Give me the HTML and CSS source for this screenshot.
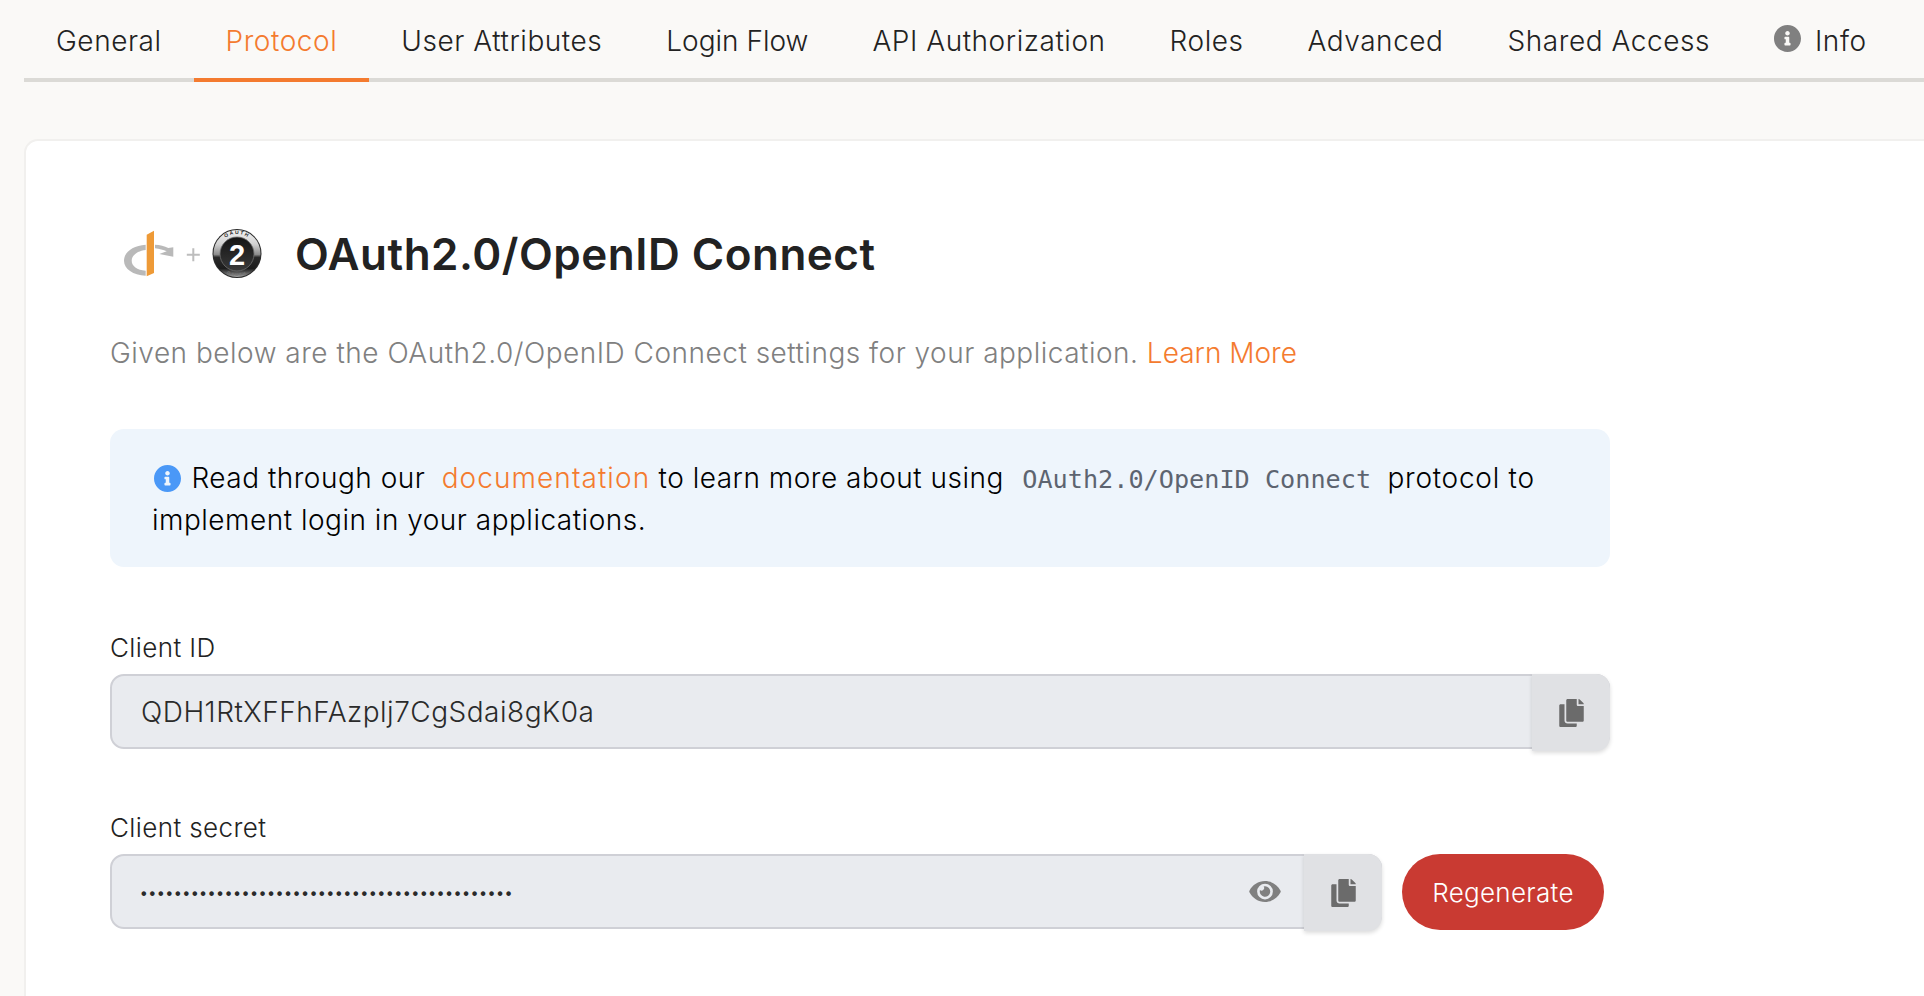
FILE: index.html
```html
<!DOCTYPE html>
<html lang="en">
<head>
<meta charset="utf-8">
<title>Protocol</title>
<link rel="stylesheet" href="styles.css">
</head>
<body>
<svg class="defs" width="0" height="0" aria-hidden="true">
  <symbol id="i-copy" viewBox="0 0 448 512"><path d="M320 448v40c0 13.255-10.745 24-24 24H24c-13.255 0-24-10.745-24-24V120c0-13.255 10.745-24 24-24h72v296c0 30.879 25.121 56 56 56h168zm0-344V0H152c-13.255 0-24 10.745-24 24v368c0 13.255 10.745 24 24 24h272c13.255 0 24-10.745 24-24V128H344c-13.2 0-24-10.8-24-24zm120.971-31.029L375.029 7.029A24 24 0 0 0 358.059 0H352v96h96v-6.059a24 24 0 0 0-7.029-16.97z"/></symbol>
  <symbol id="i-info" viewBox="8 8 496 496"><path d="M256 8C119.043 8 8 119.083 8 256c0 136.997 111.043 248 248 248s248-111.003 248-248C504 119.083 392.957 8 256 8zm0 110c23.196 0 42 18.804 42 42s-18.804 42-42 42-42-18.804-42-42 18.804-42 42-42zm56 254c0 6.627-5.373 12-12 12h-88c-6.627 0-12-5.373-12-12v-24c0-6.627 5.373-12 12-12h12v-64h-12c-6.627 0-12-5.373-12-12v-24c0-6.627 5.373-12 12-12h64c6.627 0 12 5.373 12 12v100h12c6.627 0 12 5.373 12 12v24z"/></symbol>
  <symbol id="i-eye" viewBox="0 64 576 384"><path d="M572.52 241.4C518.29 135.59 410.93 64 288 64S57.68 135.64 3.48 241.41a32.35 32.35 0 0 0 0 29.19C57.71 376.41 165.07 448 288 448s230.32-71.64 284.52-177.41a32.35 32.35 0 0 0 0-29.19zM288 400a144 144 0 1 1 144-144 143.93 143.93 0 0 1-144 144zm0-240a95.31 95.31 0 0 0-25.31 3.79 47.85 47.85 0 0 1-66.9 66.9A95.78 95.78 0 1 0 288 160z"/></symbol>
</svg>

<nav class="tabs">
  <a class="tab">General</a>
  <a class="tab tab-active">Protocol</a>
  <a class="tab">User Attributes</a>
  <a class="tab tab-tight">Login Flow</a>
  <a class="tab">API Authorization</a>
  <a class="tab">Roles</a>
  <a class="tab">Advanced</a>
  <a class="tab">Shared Access</a>
  <a class="tab"><svg class="tab-icon"><use href="#i-info"/></svg>Info</a>
</nav>

<main class="card">
  <header class="heading">
    <svg class="logos" viewBox="0 0 140 50" width="140" height="50" aria-hidden="true">
      <defs>
        <linearGradient id="sheen" x1="0" y1="0" x2="0" y2="1">
          <stop offset="0" stop-color="#f2f2f2"/>
          <stop offset=".3" stop-color="#d2d2d2"/>
          <stop offset=".52" stop-color="#8e8e8e"/>
          <stop offset=".58" stop-color="#2a2a2a"/>
          <stop offset=".82" stop-color="#1c1c1c"/>
          <stop offset=".95" stop-color="#777"/>
          <stop offset="1" stop-color="#aaa"/>
        </linearGradient>
        <linearGradient id="disc" x1="0" y1="0" x2="0" y2="1">
          <stop offset="0" stop-color="#141414"/>
          <stop offset="1" stop-color="#3a3a3a"/>
        </linearGradient>
        <path id="arc-top" d="M93.500 24.500a19.500 19.500 0 0 1 39 0"/>
        <path id="arc-bottom" d="M90.500 24.500a22.500 22.500 0 0 0 45 0"/>
      </defs>
      <path fill="#b9b9b9" d="M21.700 15.700C9 16.500 0 23 0 31.700 0 40 9 46 21.700 46.700v-5C13 41 7.700 37 7.700 31.700 7.700 26.500 13 22 21.700 21z"/>
      <path fill="#ee9a37" d="M22.700 5.700 30 1.700V44l-7.300 3.300z"/>
      <path fill="#b9b9b9" d="M31 15.700c5 .3 9.500 1.300 13.300 3.200l5-.6v9.400l-14-2.700 7.400-2.700c-3.300-1.400-7.200-2.600-11.700-3z"/>
      <path fill="#bdbdbd" d="M62.800 24.700h5.500v-5.500h2v5.500h5.500v2h-5.500v5.500h-2v-5.500h-5.500z"/>
      <circle cx="113" cy="24.500" r="24.500" fill="#2b2b2b"/>
      <circle cx="113" cy="24.500" r="23.500" fill="url(#sheen)"/>
      <circle cx="113" cy="25" r="17" fill="url(#disc)" stroke="#6f6f6f" stroke-width=".8"/>
      <text class="badge-num" x="113" y="35.500" text-anchor="middle">2</text>
      <text class="badge-top"><textPath href="#arc-top" startOffset="50%" text-anchor="middle">OAUTH</textPath></text>
      <text class="badge-bottom"><textPath href="#arc-bottom" startOffset="50%" text-anchor="middle">OAUTH</textPath></text>
    </svg>
    <h1 class="title">OAuth2.0/OpenID Connect</h1>
  </header>

  <p class="desc">Given below are the OAuth2.0/OpenID Connect settings for your application. <a class="link learn">Learn More</a></p>

  <div class="alert">
    <div class="alert-line"><svg class="alert-icon"><use href="#i-info"/></svg> Read through our <a class="link doc">documentation</a> to learn more about using <code class="code">OAuth2.0/OpenID Connect</code> <span class="alert-end">protocol to</span></div>
    <div class="alert-line">implement login in your applications.</div>
  </div>

  <div class="field">
    <label class="label">Client ID</label>
    <div class="row">
      <div class="input">
        <span class="value">QDH1RtXFFhFAzplj7CgSdai8gK0a</span>
        <button class="copy"><svg class="copy-icon"><use href="#i-copy"/></svg></button>
      </div>
    </div>
  </div>

  <div class="field">
    <label class="label">Client secret</label>
    <div class="row">
      <div class="input input-secret">
        <span class="value dots">••••••••••••••••••••••••••••••••••••••••••••</span>
        <svg class="eye"><use href="#i-eye"/></svg>
        <button class="copy"><svg class="copy-icon"><use href="#i-copy"/></svg></button>
      </div>
      <button class="regen">Regenerate</button>
    </div>
  </div>
</main>
</body>
</html>
```
FILE: styles.css
```css
* { box-sizing: border-box; }
html, body { height: 996px; overflow: hidden; }
body {
  margin: 0;
  background: #faf9f7;
  font-family: Inter, "Liberation Sans", sans-serif;
  font-weight: 300;
  color: #222;
}
.defs { position: absolute; }

.tabs {
  display: flex;
  margin-left: 24px;
  height: 82px;
  border-bottom: 4px solid #dbdad6;
}
.tab {
  display: flex;
  align-items: center;
  gap: 14px;
  height: 82px;
  padding: 8px 32px 4px;
  border-bottom: 4px solid transparent;
  font-size: 28px;
  letter-spacing: 0.55px;
  color: #222;
  white-space: nowrap;
}
.tab-tight { letter-spacing: 0; }
.tab-active { color: #f47b2f; border-bottom-color: #f47b2f; }
.tab-icon { width: 27px; height: 27px; fill: #808080; margin-top: -6px; }

.card {
  margin: 57px 0 0 24px;
  width: 1900px;
  height: 857px;
  background: #fff;
  border: 2px solid #f1f0ee;
  border-width: 2px 0 0 2px;
  border-radius: 14px 0 0 0;
  padding: 87px 0 0 84px;
}
.heading { display: flex; align-items: center; gap: 31px; margin-left: 14px; height: 52px; }
.logos { flex: none; }
.badge-num { font: 800 29px "Liberation Sans", sans-serif; fill: #fff; }
.badge-top { font: 700 5px "Liberation Sans", sans-serif; fill: #1c1c1c; letter-spacing: 1.4px; }
.badge-bottom { font: 700 4px "Liberation Sans", sans-serif; fill: #777; letter-spacing: 1.4px; }
.title { margin: 0; font-size: 44px; font-weight: 600; color: #222; letter-spacing: 0.5px; line-height: 52px; }

.desc { margin: 53px 0 0; width: 1500px; font-size: 28px; letter-spacing: 0.5px; line-height: 40px; color: #808080; }
.link { color: #f47b2f; }
.learn { letter-spacing: 0; }

.alert {
  margin-top: 56px;
  width: 1500px;
  height: 138px;
  padding: 29px 42px 0;
  background: #eef5fc;
  border-radius: 14px;
  font-size: 28px;
  letter-spacing: 0.5px;
  line-height: 41px;
  color: #000;
}
.alert-line { white-space: nowrap; }
.alert-icon { width: 27px; height: 27px; fill: #4a98f7; vertical-align: -4px; margin: 0 2px; }
.doc { margin: 0 0 0 8px; letter-spacing: 1.07px; }
.code {
  margin: 0 8px 0 10px;
  font-family: "DejaVu Sans Mono", monospace;
  font-size: 25.2px;
  letter-spacing: 0;
  font-weight: 400;
  color: #5d6470;
}
.alert-end { letter-spacing: 0.75px; }

.field { width: 1500px; margin-top: 66px; }
.field + .field { margin-top: 64px; }
.label { display: block; font-size: 26px; letter-spacing: 0.4px; line-height: 30px; margin-bottom: 11px; color: #222; }
.row { display: flex; gap: 20px; }
.input {
  flex: 1;
  display: flex;
  align-items: center;
  height: 75px;
  padding-left: 29px;
  background: #e9ebef;
  border: 2px solid #cfd0d6;
  border-radius: 14px;
  position: relative;
}
.input-secret { flex: none; width: 1272px; }
.value { flex: 1; font-size: 28px; letter-spacing: 0.5px; color: #2a2a2a; }
.dots { font-size: 16px; letter-spacing: 2.88px; padding-top: 4px; font-family: "Liberation Sans", sans-serif; font-weight: 700; }
.eye { width: 32px; height: 21px; fill: #808080; margin-right: 23px; }
.copy {
  flex: none;
  align-self: stretch;
  width: 78px;
  height: 77px;
  margin: -2px -2px -2px 0;
  padding: 0;
  display: flex;
  align-items: center;
  justify-content: center;
  background: #e0e1e4;
  border: 0;
  border-radius: 0 14px 14px 0;
  box-shadow: 0 2px 4px rgba(0, 0, 0, .14);
}
.copy-icon { width: 25px; height: 28px; fill: #6b6b6b; }
.regen {
  width: 202px;
  height: 76px;
  background: #c93a32;
  color: #fff;
  border: 0;
  border-radius: 38px;
  font-family: inherit;
  font-weight: 300;
  font-size: 26px;
  letter-spacing: 0.3px;
}
```
